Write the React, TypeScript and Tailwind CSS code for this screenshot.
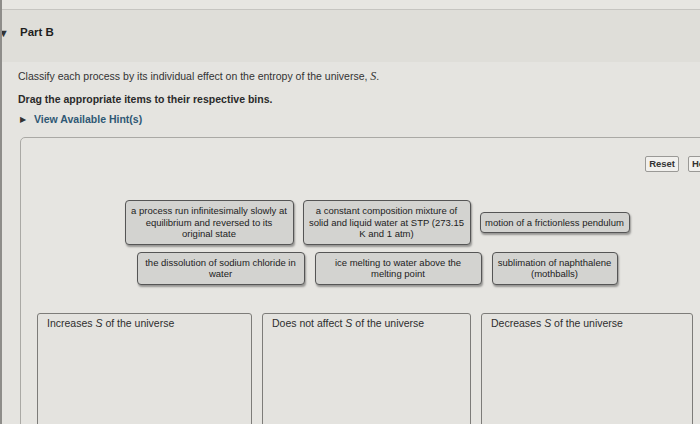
import React from 'react';

type Item = { text: string; w: string };

const rowOne: Item[] = [
  { text: 'a process run infinitesimally slowly at equilibrium and reversed to its original state', w: 'w-[169px]' },
  { text: 'a constant composition mixture of solid and liquid water at STP (273.15 K and 1 atm)', w: 'w-[168px]' },
  { text: 'motion of a frictionless pendulum', w: 'w-[150px]' },
];

const rowTwo: Item[] = [
  { text: 'the dissolution of sodium chloride in water', w: 'w-[168px]' },
  { text: 'ice melting to water above the melting point', w: 'w-[167px]' },
  { text: 'sublimation of naphthalene (mothballs)', w: 'w-[126px]' },
];

const bins = [
  { pre: 'Increases', post: 'of the universe', w: 'w-[215px]' },
  { pre: 'Does not affect', post: 'of the universe', w: 'w-[209px]' },
  { pre: 'Decreases', post: 'of the universe', w: 'w-[212px]' },
];

// ドラッグ用のタイル
const Tile = ({ text, w }: Item) => (
  <div
    className={`${w} px-[4px] py-[4px] text-center text-[9.5px] leading-[11.5px] text-[#222] bg-[#d3d3d0] border border-[#555] rounded-[4px] shadow-[1px_2px_2px_rgba(0,0,0,0.35)]`}
  >
    {text}
  </div>
);

export default function App() {
  return (
    <div className="relative w-[700px] h-[424px] overflow-hidden bg-[#e5e4e0] border-l-2 border-[#8e8d8a] font-['Liberation_Sans',Arial,sans-serif] text-[#2a2a2a]">
      {/* 上の区切り線 */}
      <div className="h-[10px] bg-[#e7e6e2] border-b border-[#c6c5c1]" />

      {/* Part B 見出し */}
      <div className="h-[52px] bg-[#dfded9] pt-[15px]">
        <div className="flex items-center h-[16px]">
          <span className="text-[11px] leading-none text-[#333] -ml-[4px] w-[22px]">▼</span>
          <span className="text-[11.5px] font-bold text-[#1f1f1f]">Part B</span>
        </div>
      </div>

      {/* 設問 */}
      <div className="pl-[16px] pt-[6px]">
        <p className="h-[16px] leading-[16px] text-[10.5px] text-[#333]">
          Classify each process by its individual effect on the entropy of the universe,{' '}
          <span className="italic font-['Liberation_Serif',serif] text-[12px]">S</span>.
        </p>
        <p className="mt-[7px] h-[16px] leading-[16px] text-[10.5px] font-bold text-[#2a2a2a]">
          Drag the appropriate items to their respective bins.
        </p>
        <div className="mt-[5px] h-[16px] flex items-center">
          <span className="text-[8px] text-[#333] ml-[2px] w-[14px]">▶</span>
          <span className="text-[10.5px] font-bold text-[#2f5874]">View Available Hint(s)</span>
        </div>
      </div>

      {/* 回答パネル */}
      <div className="ml-[18px] mt-[9px] w-[714px] h-[320px] bg-[#e6e5e1] border border-[#aaa9a5] rounded-[5px] pt-[18px]">
        <div className="flex justify-end gap-[9px] pr-[13px]">
          <button className="h-[16px] px-[3px] text-[9.5px] font-bold text-[#333] bg-[#f1f0ed] border border-[#9a9996] rounded-[2px] leading-none">
            Reset
          </button>
          <button className="h-[16px] w-[32px] px-[3px] text-left text-[9.5px] font-bold text-[#333] bg-[#f1f0ed] border border-[#9a9996] rounded-[2px] leading-none">
            Help
          </button>
        </div>

        <div className="mt-[28px] flex justify-center items-center gap-[9px]">
          {rowOne.map((it) => (
            <Tile key={it.text} {...it} />
          ))}
        </div>
        <div className="mt-[7px] flex justify-center items-center gap-[10px]">
          {rowTwo.map((it) => (
            <Tile key={it.text} {...it} />
          ))}
        </div>

        {/* ビン */}
        <div className="mt-[28px] pl-[16px] flex gap-[10px]">
          {bins.map((b) => (
            <div
              key={b.pre}
              className={`${b.w} h-[140px] border border-[#7d7c79] rounded-t-[3px] bg-[#e4e3df] pl-[9px] pt-[2px] text-[10.5px] leading-[14px] text-[#2e2e2e]`}
            >
              {b.pre} <span className="italic">S</span> {b.post}
            </div>
          ))}
        </div>
      </div>
    </div>
  );
}
